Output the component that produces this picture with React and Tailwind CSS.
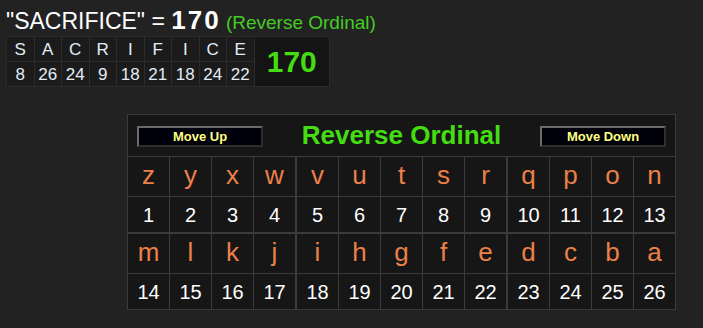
const WORD = [
  ["S", 8], ["A", 26], ["C", 24], ["R", 9], ["I", 18], ["F", 21], ["I", 18], ["C", 24], ["E", 22],
];

const ROWS = [
  ["zyxw", "vutsr", "qpon"],
  ["mlkj", "ihgfe", "dcba"],
];

function val(ch) {
  return 26 - (ch.charCodeAt(0) - 97);
}

function MoveBtn({ children }) {
  return (
    <button className="w-[126px] h-[21px] bg-[#00000a] border-2 border-t-[#6b6b6b] border-l-[#6b6b6b] border-b-[#2e2e2e] border-r-[#2e2e2e] text-[13px] font-bold leading-none text-[#ffff80]">
      {children}
    </button>
  );
}

function Group({ letters, first }) {
  return (
    <div className={first ? "flex" : "flex border-l-2 border-[#3b3b3b]"}>
      {letters.split("").map((ch, i) => (
        <div key={ch} className={i ? "w-[42px] border-l border-[#3b3b3b]" : "w-[41px]"}>
          <div className="h-[40px] border-b border-[#3b3b3b] flex items-center justify-center text-[26px] leading-none text-[#ec8048] pb-[3px]">
            {ch}
          </div>
          <div className="h-[35px] flex items-center justify-center text-[20px] leading-none text-white">
            {val(ch)}
          </div>
        </div>
      ))}
    </div>
  );
}

export default function App() {
  return (
    <div className="w-[703px] h-[328px] bg-[#222222] font-['Liberation_Sans',Arial,sans-serif] overflow-hidden">
      {/* 제목 */}
      <div className="pl-[6px] pt-[1px] h-[36px] flex items-baseline whitespace-pre text-white">
        <span className="text-[23px]">"SACRIFICE" = </span>
        <span className="text-[26px] font-bold tracking-[2px]">170</span>
        <span className="text-[19px] text-[#44cc22]"> (Reverse Ordinal)</span>
      </div>

      {/* 단어 표 */}
      <div className="ml-[6px] flex w-[324px] h-[51px] border border-[#2a2a2a] bg-[#1b1b1b]">
        {WORD.map(([ch, n], i) => (
          <div key={i} className={i ? "w-[27.5px] border-l border-[#2c2c2c]" : "w-[26.5px]"}>
            <div className="h-[25px] border-b border-[#2c2c2c] flex items-center justify-center text-[17px] leading-none text-[#e2ecf6]">
              {ch}
            </div>
            <div className="h-[24px] flex items-center justify-center text-[17px] leading-none text-[#e2ecf6]">
              {n}
            </div>
          </div>
        ))}
        <div className="flex-1 border-l border-[#2c2c2c] bg-[#141414] flex items-center justify-center text-[30px] font-bold leading-none text-[#44dd11]">
          170
        </div>
      </div>

      {/* 알파벳 표 */}
      <div className="ml-[127px] mt-[27px] w-[549px] border border-[#3b3b3b] bg-[#161616]">
        <div className="h-[42px] border-b border-[#3b3b3b] flex items-center justify-between px-[9px] pt-[1px]">
          <MoveBtn>Move Up</MoveBtn>
          <span className="text-[26px] font-bold leading-none text-[#44dd11] pb-[2px]">Reverse Ordinal</span>
          <MoveBtn>Move Down</MoveBtn>
        </div>
        {ROWS.map((row, r) => (
          <div key={r} className={r ? "flex border-t-2 border-[#3b3b3b]" : "flex border-b-0"}>
            {row.map((g, i) => (
              <Group key={g} letters={g} first={i === 0} />
            ))}
          </div>
        ))}
      </div>
    </div>
  );
}
